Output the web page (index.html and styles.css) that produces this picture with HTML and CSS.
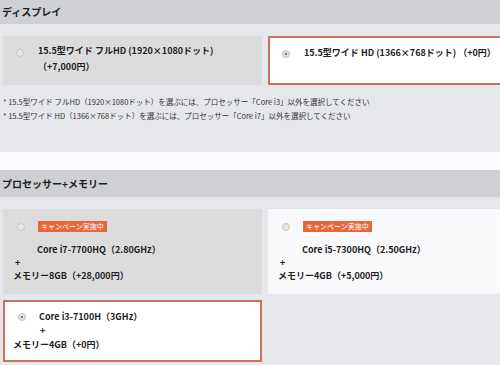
FILE: index.html
```html
<!DOCTYPE html>
<html lang="ja">
<head>
    <meta charset="UTF-8">
    <meta name="viewport" content="width=device-width, initial-scale=1.0">
    <title>カスタマイズ</title>
    <link rel="stylesheet" href="styles.css">
</head>
<body>

<section class="group">
    <h2 class="group-title">ディスプレイ</h2>
    <div class="group-body display-body">
        <div class="options">
            <div class="option display-option">
                <span class="radio"></span>
                <span class="option-text">15.5型ワイド フルHD (1920×1080ドット)<br>（+7,000円）</span>
            </div>
            <div class="option display-option selected">
                <span class="radio checked"></span>
                <span class="option-text">15.5型ワイド HD (1366×768ドット) （+0円）</span>
            </div>
        </div>
        <div class="notes">
            <p>* 15.5型ワイド フルHD（1920×1080ドット）を選ぶには、プロセッサー「Core i3」以外を選択してください</p>
            <p>* 15.5型ワイド HD（1366×768ドット）を選ぶには、プロセッサー「Core i7」以外を選択してください</p>
        </div>
    </div>
</section>

<section class="group">
    <h2 class="group-title tall">プロセッサー+メモリー</h2>
    <div class="group-body cpu-body">
        <div class="options cpu-grid">
            <div class="option cpu-option">
                <div class="cpu-top">
                    <span class="radio"></span>
                    <span class="badge">キャンペーン実施中</span>
                </div>
                <div class="cpu-name">Core i7-7700HQ（2.80GHz）</div>
                <div class="cpu-plus">+</div>
                <div class="cpu-mem">メモリー8GB（+28,000円）</div>
            </div>
            <div class="option cpu-option light">
                <div class="cpu-top">
                    <span class="radio"></span>
                    <span class="badge">キャンペーン実施中</span>
                </div>
                <div class="cpu-name">Core i5-7300HQ（2.50GHz）</div>
                <div class="cpu-plus">+</div>
                <div class="cpu-mem">メモリー4GB（+5,000円）</div>
            </div>
            <div class="option cpu-option selected short">
                <div class="cpu-first">
                    <span class="radio checked"></span>
                    <span class="cpu-name-inline">Core i3-7100H（3GHz）</span>
                </div>
                <div class="cpu-plus indented">+</div>
                <div class="cpu-mem">メモリー4GB（+0円）</div>
            </div>
        </div>
    </div>
</section>

</body>
</html>
```

FILE: styles.css
```css
html {
    overflow: hidden;
}
body {
    margin: 0;
    width: 530px;
    background-color: #fbfbfd;
    font-family: "Noto Sans CJK JP", "Noto Sans", sans-serif;
    color: #222;
}
.group {
    margin-bottom: 18px;
}
.group-title {
    margin: 0;
    height: 24px;
    line-height: 24px;
    padding-left: 2px;
    background-color: #cfd0d4;
    font-size: 10px;
    font-weight: bold;
    color: #1c1c1c;
}
.group-title.tall {
    height: 27px;
    line-height: 27px;
}
.group-body {
    background-color: #e5e7ea;
    padding: 12px 3px;
}
.display-body {
    height: 128px;
    box-sizing: border-box;
}
.options {
    display: grid;
    grid-template-columns: 259px 259px;
    gap: 6px;
}
.option {
    box-sizing: border-box;
    background-color: #dcdcdc;
    font-size: 9px;
    font-weight: bold;
}
.option.light {
    background-color: #f9f9fb;
}
.option.selected {
    background-color: #fff;
    border: 2px solid #c8735a;
}
.radio {
    display: inline-block;
    flex: none;
    width: 8px;
    height: 8px;
    border-radius: 50%;
    background-color: #e6e6e8;
    border: 1px solid #c6c6ca;
    box-sizing: border-box;
    position: relative;
}
.radio.checked {
    background-color: #e2e2e2;
    border-color: #c0c0c0;
}
.radio.checked::after {
    content: "";
    position: absolute;
    left: 2px;
    top: 2px;
    width: 2px;
    height: 2px;
    border-radius: 50%;
    background-color: #555;
}
.display-option {
    height: 49px;
    display: flex;
    align-items: flex-start;
    padding: 7px 0 0 13px;
    line-height: 16px;
}
.display-option .radio {
    margin: 6px 14px 0 0;
}
.display-option.selected {
    padding: 7px 0 0 12px;
}
.display-option.selected .radio {
    margin-top: 5px;
}
.notes {
    margin-top: 10px;
    font-size: 7.5px;
    line-height: 14px;
    color: #333;
}
.notes p {
    margin: 0;
    white-space: nowrap;
}
.cpu-grid {
    row-gap: 6px;
}
.cpu-option {
    height: 85px;
    padding: 12px 0 0 10px;
    line-height: 13px;
}
.cpu-top {
    display: flex;
    align-items: center;
    height: 11px;
}
.cpu-top .radio {
    margin: 0 13px 0 4px;
}
.badge {
    background-color: #e8673a;
    color: #fff;
    font-size: 7px;
    font-weight: normal;
    line-height: 11px;
    padding: 0 3px;
}
.cpu-name {
    margin-top: 11px;
    padding-left: 24px;
}
.cpu-plus {
    padding-left: 2px;
}
.cpu-option.short {
    height: 62px;
    padding: 8px 0 0 8px;
    line-height: 14px;
}
.cpu-first {
    display: flex;
    align-items: center;
}
.cpu-first .radio {
    margin: 0 13px 0 5px;
}
.cpu-plus.indented {
    padding-left: 27px;
}
```
